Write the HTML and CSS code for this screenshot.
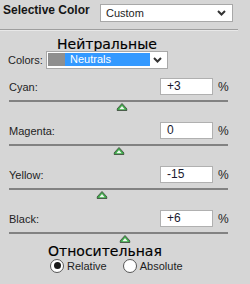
FILE: index.html
```html
<!DOCTYPE html>
<html lang="en">
<head>
  <meta charset="UTF-8">
  <title>Selective Color</title>
  <link rel="stylesheet" href="styles.css">
</head>
<body>
  <div class="panel">
    <div class="head">
      <span class="title">Selective Color</span>
      <div class="select preset">
        <span>Custom</span>
        <svg class="chev" width="9" height="6" viewBox="0 0 9 6"><polyline points="1,1 4.5,4.5 8,1" fill="none" stroke="#333" stroke-width="2"/></svg>
      </div>
    </div>
    <div class="sep"></div>

    <div class="note note-top">Нейтральные</div>
    <div class="colors-row">
      <span class="colors-label">Colors:</span>
      <div class="select colors">
        <span class="swatch"></span>
        <span class="pick">Neutrals</span>
        <svg class="chev" width="9" height="6" viewBox="0 0 9 6"><polyline points="1,1 4.5,4.5 8,1" fill="none" stroke="#333" stroke-width="2"/></svg>
      </div>
    </div>

    <div class="sliders">
      <div class="adj">
        <div class="adj-top"><span class="adj-label">Cyan:</span><div class="val">+3</div><span class="pct">%</span></div>
        <div class="track"></div>
        <div class="knob"><svg class="thumb" style="left: 51.5%" width="11" height="8" viewBox="0 0 11 8"><path d="M5.5 0.5 L10.5 6 L10.5 7.5 L0.5 7.5 L0.5 6 Z" fill="#3faa4a" stroke="#4b5d4b"/><path d="M5.5 3 L8.2 6.3 L2.8 6.3 Z" fill="#eef8ee"/></svg></div>
      </div>
      <div class="adj">
        <div class="adj-top"><span class="adj-label">Magenta:</span><div class="val">0</div><span class="pct">%</span></div>
        <div class="track"></div>
        <div class="knob"><svg class="thumb" style="left: 50%" width="11" height="8" viewBox="0 0 11 8"><path d="M5.5 0.5 L10.5 6 L10.5 7.5 L0.5 7.5 L0.5 6 Z" fill="#3faa4a" stroke="#4b5d4b"/><path d="M5.5 3 L8.2 6.3 L2.8 6.3 Z" fill="#eef8ee"/></svg></div>
      </div>
      <div class="adj">
        <div class="adj-top"><span class="adj-label">Yellow:</span><div class="val">-15</div><span class="pct">%</span></div>
        <div class="track"></div>
        <div class="knob"><svg class="thumb" style="left: 42.5%" width="11" height="8" viewBox="0 0 11 8"><path d="M5.5 0.5 L10.5 6 L10.5 7.5 L0.5 7.5 L0.5 6 Z" fill="#3faa4a" stroke="#4b5d4b"/><path d="M5.5 3 L8.2 6.3 L2.8 6.3 Z" fill="#eef8ee"/></svg></div>
      </div>
      <div class="adj">
        <div class="adj-top"><span class="adj-label">Black:</span><div class="val">+6</div><span class="pct">%</span></div>
        <div class="track"></div>
        <div class="knob"><svg class="thumb" style="left: 53%" width="11" height="8" viewBox="0 0 11 8"><path d="M5.5 0.5 L10.5 6 L10.5 7.5 L0.5 7.5 L0.5 6 Z" fill="#3faa4a" stroke="#4b5d4b"/><path d="M5.5 3 L8.2 6.3 L2.8 6.3 Z" fill="#eef8ee"/></svg></div>
      </div>
    </div>

    <div class="note note-bottom">Относительная</div>
    <div class="method">
      <span class="radio checked"></span><span class="radio-text">Relative</span>
      <span class="radio second"></span><span class="radio-text">Absolute</span>
    </div>
  </div>
</body>
</html>
```

FILE: styles.css
```css
body { margin: 0; background: #d6d6d6; font-family: "Liberation Sans", Arial, sans-serif; font-size: 11px; color: #1e1e1e; }
.panel { width: 238px; height: 284px; }

/* header */
.head { display: flex; justify-content: space-between; align-items: flex-start; padding: 3px 5px 0 3px; }
.title { font-weight: bold; font-size: 12px; line-height: 14px; color: #151515; }
.select { box-sizing: border-box; height: 18px; border: 1px solid #a8a8a8; background: #fff; display: flex; align-items: center; }
.preset { width: 133px; margin-top: 1px; padding: 0 6px 0 5px; }
.chev { margin-left: auto; }
.sep { margin-top: 7px; width: 238px; border-top: 1px solid #9e9e9e; border-bottom: 1px solid #e8e8e8; }

/* annotations */
.note { font-family: "DejaVu Sans", sans-serif; font-size: 14px; line-height: 14px; color: #000; -webkit-text-stroke: 0.15px #000; }
.note-top { margin: 6px 0 0 57px; }
.note-bottom { margin: 1px 0 0 48px; }

/* colors */
.colors-row { display: flex; align-items: center; height: 18px; padding-left: 8px; }
.colors-label { width: 38px; }
.colors { width: 122px; padding: 0 5px 0 1px; align-items: flex-start; }
.swatch { width: 17px; height: 13px; margin-top: 1px; background: #8f8f8f; }
.pick { width: 80px; height: 13px; margin-top: 1px; padding-left: 5px; background: #3399ff; color: #fff; line-height: 13px; }
.colors .chev { align-self: center; }

/* sliders */
.sliders { margin-top: 9px; }
.adj + .adj { margin-top: 11px; }
.adj-top { display: flex; align-items: center; height: 17px; }
.adj-label { flex: 1; margin-left: 9px; }
.val { box-sizing: border-box; width: 53px; height: 17px; border: 1px solid #b0b0b0; background: #fff; padding-left: 6px; font-size: 12px; line-height: 15px; color: #1a1a30; }
.pct { width: 20px; margin-left: 5px; font-size: 12px; }
.track { margin: 5px 0 0 9px; width: 219px; height: 2px; background: #828282; }
.knob { position: relative; width: 219px; height: 8px; margin: 1px 0 0 9px; }
.thumb { position: absolute; top: 0; transform: translateX(-50%); }

/* method */
.method { display: flex; align-items: center; height: 15px; padding-left: 50px; }
.radio { box-sizing: border-box; width: 14px; height: 14px; border-radius: 50%; border: 1px solid #555; background: #fff; display: flex; align-items: center; justify-content: center; }
.radio.checked::after { content: ""; width: 7px; height: 7px; border-radius: 50%; background: #1a1a1a; }
.radio.second { margin-left: 16px; }
.radio-text { margin-left: 3px; }
```
